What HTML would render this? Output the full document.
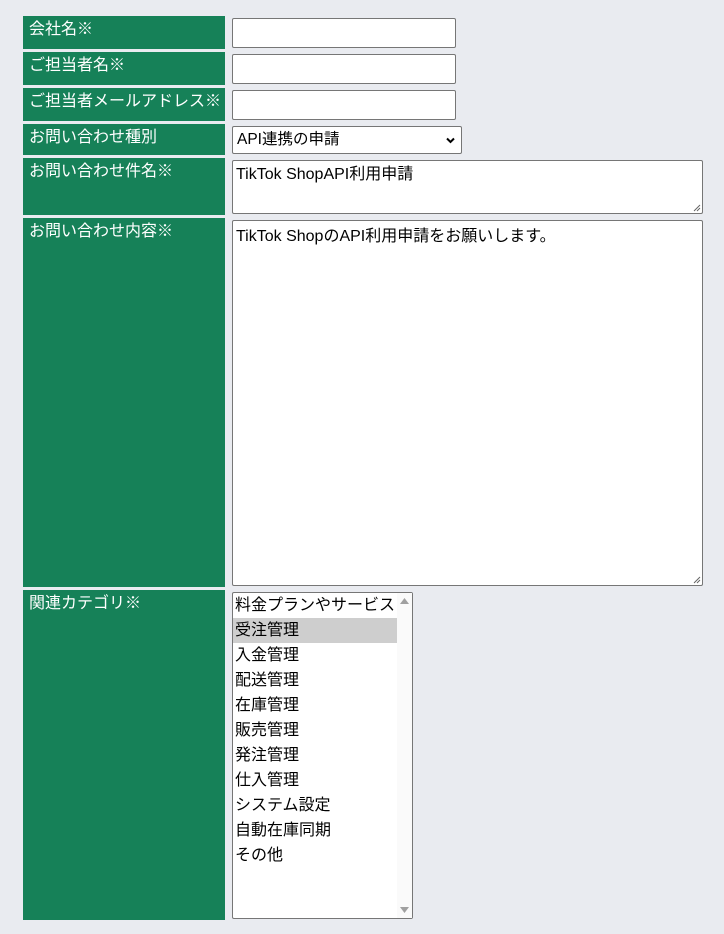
<!DOCTYPE html>
<html><head><meta charset="utf-8"><style>
body{margin:0;width:724px;height:934px;background:#e9ebf0;font-family:"Liberation Sans","Noto Sans CJK JP",sans-serif;position:relative;overflow:hidden}
.l{position:absolute;left:23px;width:202px;background:#168158;color:#fff;font-size:16px;box-sizing:border-box;padding:4px 0 0 6px;line-height:19px;white-space:nowrap}
.b{position:absolute;left:232px;background:#fff;border:1px solid #767676;border-radius:2px;box-sizing:border-box;font-size:16px;color:#000}
.t{padding:3px 3px;line-height:21px}
.opt{height:25px;line-height:25px;padding-left:2px;font-size:16px}
</style></head><body>
<div class="l" style="top:16px;height:33px">会社名※</div>
<div class="l" style="top:52px;height:33px">ご担当者名※</div>
<div class="l" style="top:88px;height:33px">ご担当者メールアドレス※</div>
<div class="l" style="top:124px;height:31px">お問い合わせ種別</div>
<div class="l" style="top:158px;height:57px">お問い合わせ件名※</div>
<div class="l" style="top:218px;height:369px">お問い合わせ内容※</div>
<div class="l" style="top:590px;height:330px">関連カテゴリ※</div>

<div class="b" style="top:18px;width:224px;height:30px"></div>
<div class="b" style="top:54px;width:224px;height:30px"></div>
<div class="b" style="top:90px;width:224px;height:30px"></div>
<div class="b" style="top:126px;width:230px;height:28px;line-height:26px;padding-left:4px;font-size:15.5px">API連携の申請
<svg style="position:absolute;right:6px;top:10px" width="9" height="7" viewBox="0 0 9 7"><path d="M1 1.5 L4.5 5 L8 1.5" stroke="#000" stroke-width="2" fill="none"/></svg></div>
<div class="b t" style="top:160px;width:471px;height:54px">TikTok ShopAPI利用申請
<svg style="position:absolute;right:1px;bottom:1px" width="8" height="8"><path d="M7 1 L1 7 M7 4 L4 7" stroke="#666" stroke-width="1"/></svg></div>
<div class="b t" style="top:220px;width:471px;height:366px;padding-top:5px">TikTok ShopのAPI利用申請をお願いします。
<svg style="position:absolute;right:1px;bottom:1px" width="8" height="8"><path d="M7 1 L1 7 M7 4 L4 7" stroke="#666" stroke-width="1"/></svg></div>
<div class="b" style="top:592px;width:181px;height:327px;padding-top:0px">
<div style="width:164px;white-space:nowrap;overflow:hidden">
<div class="opt">料金プランやサービス</div>
<div class="opt" style="background:#cecece">受注管理</div>
<div class="opt">入金管理</div>
<div class="opt">配送管理</div>
<div class="opt">在庫管理</div>
<div class="opt">販売管理</div>
<div class="opt">発注管理</div>
<div class="opt">仕入管理</div>
<div class="opt">システム設定</div>
<div class="opt">自動在庫同期</div>
<div class="opt">その他</div>
</div>
<div style="position:absolute;right:0;top:0;width:15px;height:100%;background:#fafafa"></div>
<svg style="position:absolute;right:3px;top:5px" width="9" height="6"><path d="M0 6 L4.5 0 L9 6Z" fill="#a0a0a0"/></svg>
<svg style="position:absolute;right:3px;bottom:5px" width="9" height="6"><path d="M0 0 L4.5 6 L9 0Z" fill="#a0a0a0"/></svg>
</div>
</body></html>
